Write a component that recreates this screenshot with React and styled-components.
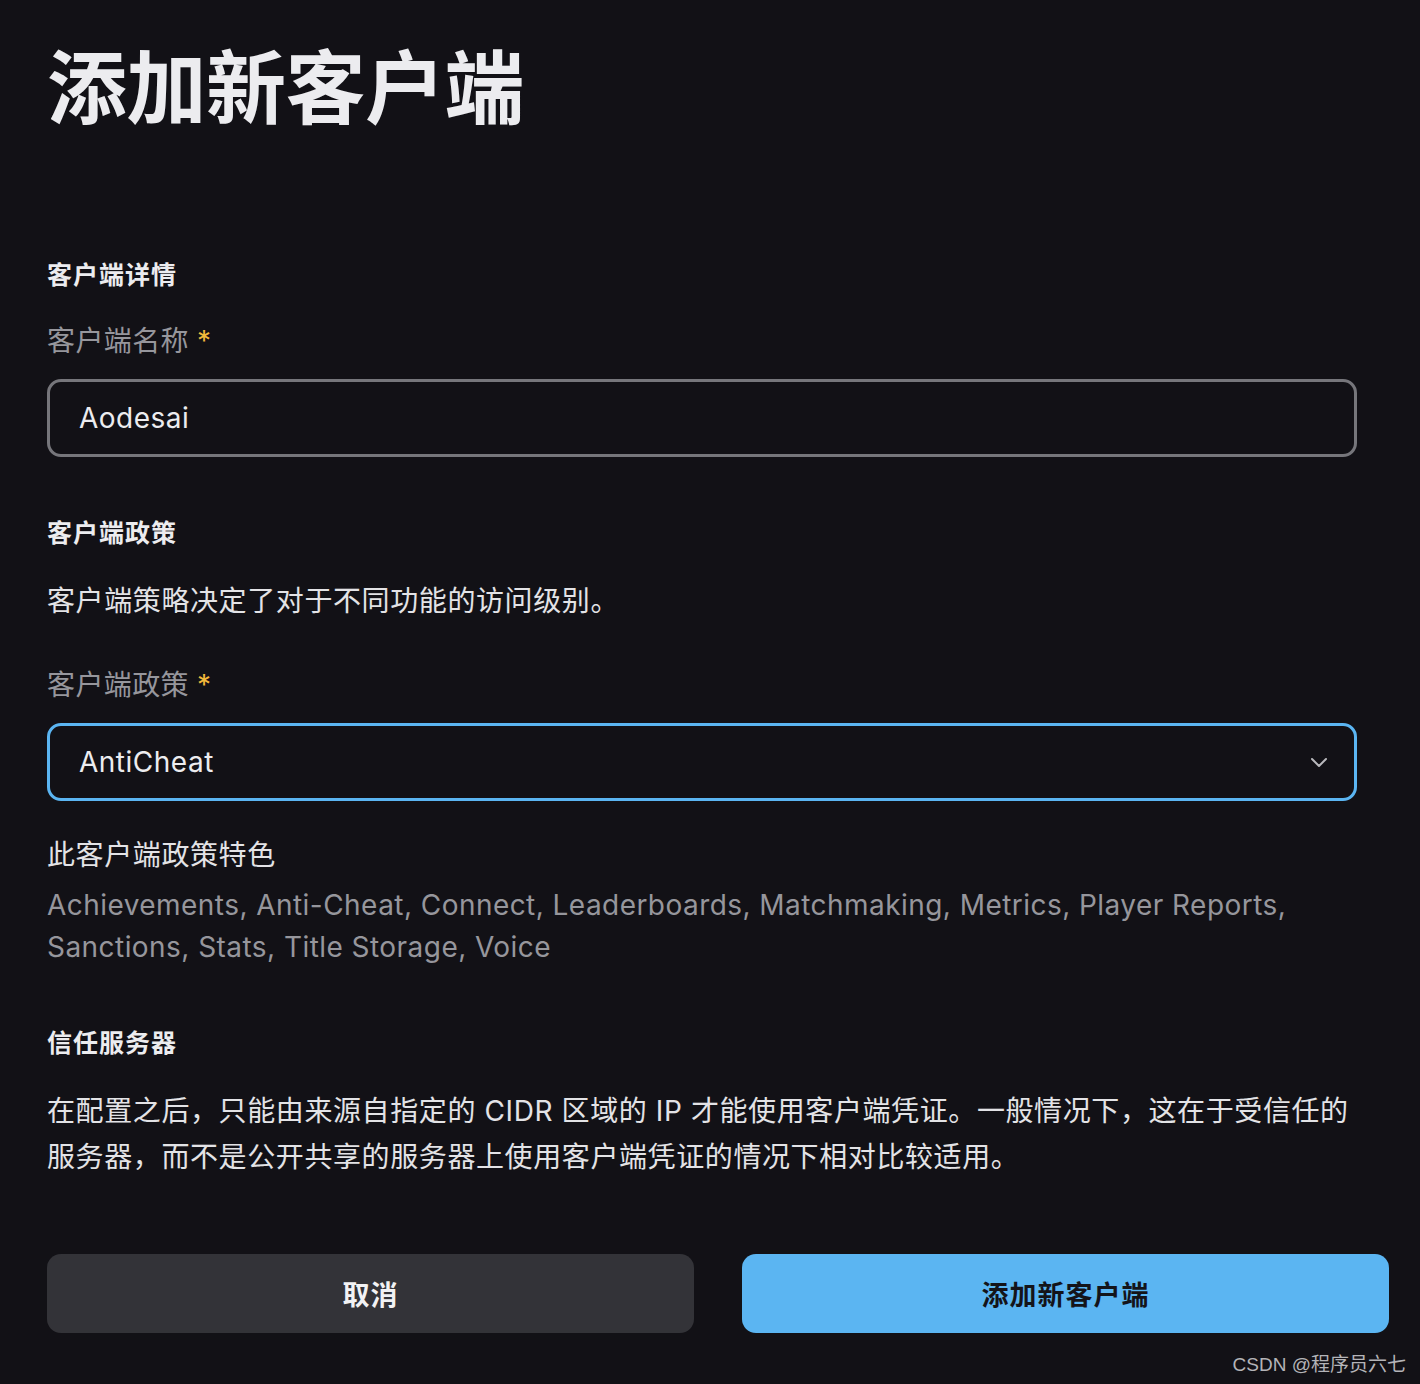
import React from 'react';
import styled, { createGlobalStyle } from 'styled-components';

const GlobalStyle = createGlobalStyle`
  html, body {
    margin: 0;
    padding: 0;
    background: #121116;
  }
  body {
    font-family: Inter, "Noto Sans CJK SC", sans-serif;
    color: #e6e6e9;
  }
`;

const Page = styled.div`
  width: 1420px;
  height: 1384px;
  box-sizing: border-box;
  padding: 40px 31px 0 47px;
  position: relative;
  background: #121116;
`;

const Title = styled.h1`
  margin: 0;
  font-size: 80px;
  line-height: 96px;
  font-weight: 700;
  color: #ececef;
  letter-spacing: -0.5px;
`;

const SectionTitle = styled.h2`
  margin: ${(p) => p.$top}px 0 0;
  font-size: 25px;
  line-height: 36px;
  font-weight: 700;
  color: #ececef;
  letter-spacing: 1px;
`;

const Label = styled.div`
  margin-top: ${(p) => p.$top}px;
  font-size: 28px;
  line-height: 40px;
  color: #96969c;
  letter-spacing: 0.4px;

  span {
    color: #f2b93b;
    margin-left: 8px;
  }
`;

const Field = styled.div`
  margin-top: 18px;
  width: 1310px;
  height: 78px;
  box-sizing: border-box;
  border: 3px solid ${(p) => (p.$focused ? '#5bb5f2' : '#76767b')};
  border-radius: 14px;
  display: flex;
  align-items: center;
  justify-content: space-between;
  padding: 0 26px 0 29px;
  font-size: 28px;
  color: #ececef;
  letter-spacing: 0.5px;
`;

const Text = styled.p`
  margin: ${(p) => p.$top}px 0 0;
  font-size: 28px;
  line-height: ${(p) => p.$lh || 40}px;
  color: ${(p) => (p.$muted ? '#96969c' : '#e3e3e6')};
  letter-spacing: ${(p) => (p.$muted ? '0.45px' : '0.6px')};
  max-width: ${(p) => p.$max || 1320}px;
`;

const Buttons = styled.div`
  margin-top: 74px;
  display: grid;
  grid-template-columns: 647px 647px;
  gap: 48px;
`;

const Button = styled.button`
  height: 79px;
  border: none;
  border-radius: 14px;
  font-family: inherit;
  font-size: 27px;
  font-weight: 700;
  background: ${(p) => (p.$primary ? '#5bb5f2' : '#333338')};
  color: ${(p) => (p.$primary ? '#14141a' : '#f2f2f4')};
  letter-spacing: 1px;
`;

const Watermark = styled.div`
  position: absolute;
  right: 14px;
  bottom: 8px;
  font-size: 19px;
  color: #b4b4b8;
  font-family: "Liberation Sans", "Noto Sans CJK SC", sans-serif;
`;

const Chevron = () => (
  <svg width="18" height="12" viewBox="0 0 18 12" fill="none">
    <path d="M2 3l7 7 7-7" stroke="#b9b9bd" strokeWidth="2" strokeLinecap="round" strokeLinejoin="round" />
  </svg>
);

export default function App() {
  return (
    <>
      <GlobalStyle />
      <Page>
        <Title>添加新客户端</Title>

        <SectionTitle $top={121}>客户端详情</SectionTitle>
        <Label $top={28}>客户端名称<span>*</span></Label>
        <Field>Aodesai</Field>

        <SectionTitle $top={58}>客户端政策</SectionTitle>
        <Text $top={30}>客户端策略决定了对于不同功能的访问级别。</Text>
        <Label $top={44}>客户端政策<span>*</span></Label>
        <Field $focused>
          AntiCheat
          <Chevron />
        </Field>

        <Text $top={34}>此客户端政策特色</Text>
        <Text $top={9} $lh={42} $muted $max={1280}>
          Achievements, Anti-Cheat, Connect, Leaderboards, Matchmaking, Metrics, Player Reports, Sanctions, Stats, Title Storage, Voice
        </Text>

        <SectionTitle $top={57}>信任服务器</SectionTitle>
        <Text $top={27} $lh={46} $max={1318}>
          在配置之后，只能由来源自指定的 CIDR 区域的 IP 才能使用客户端凭证。一般情况下，这在于受信任的服务器，而不是公开共享的服务器上使用客户端凭证的情况下相对比较适用。
        </Text>

        <Buttons>
          <Button>取消</Button>
          <Button $primary>添加新客户端</Button>
        </Buttons>

        <Watermark>CSDN @程序员六七</Watermark>
      </Page>
    </>
  );
}
